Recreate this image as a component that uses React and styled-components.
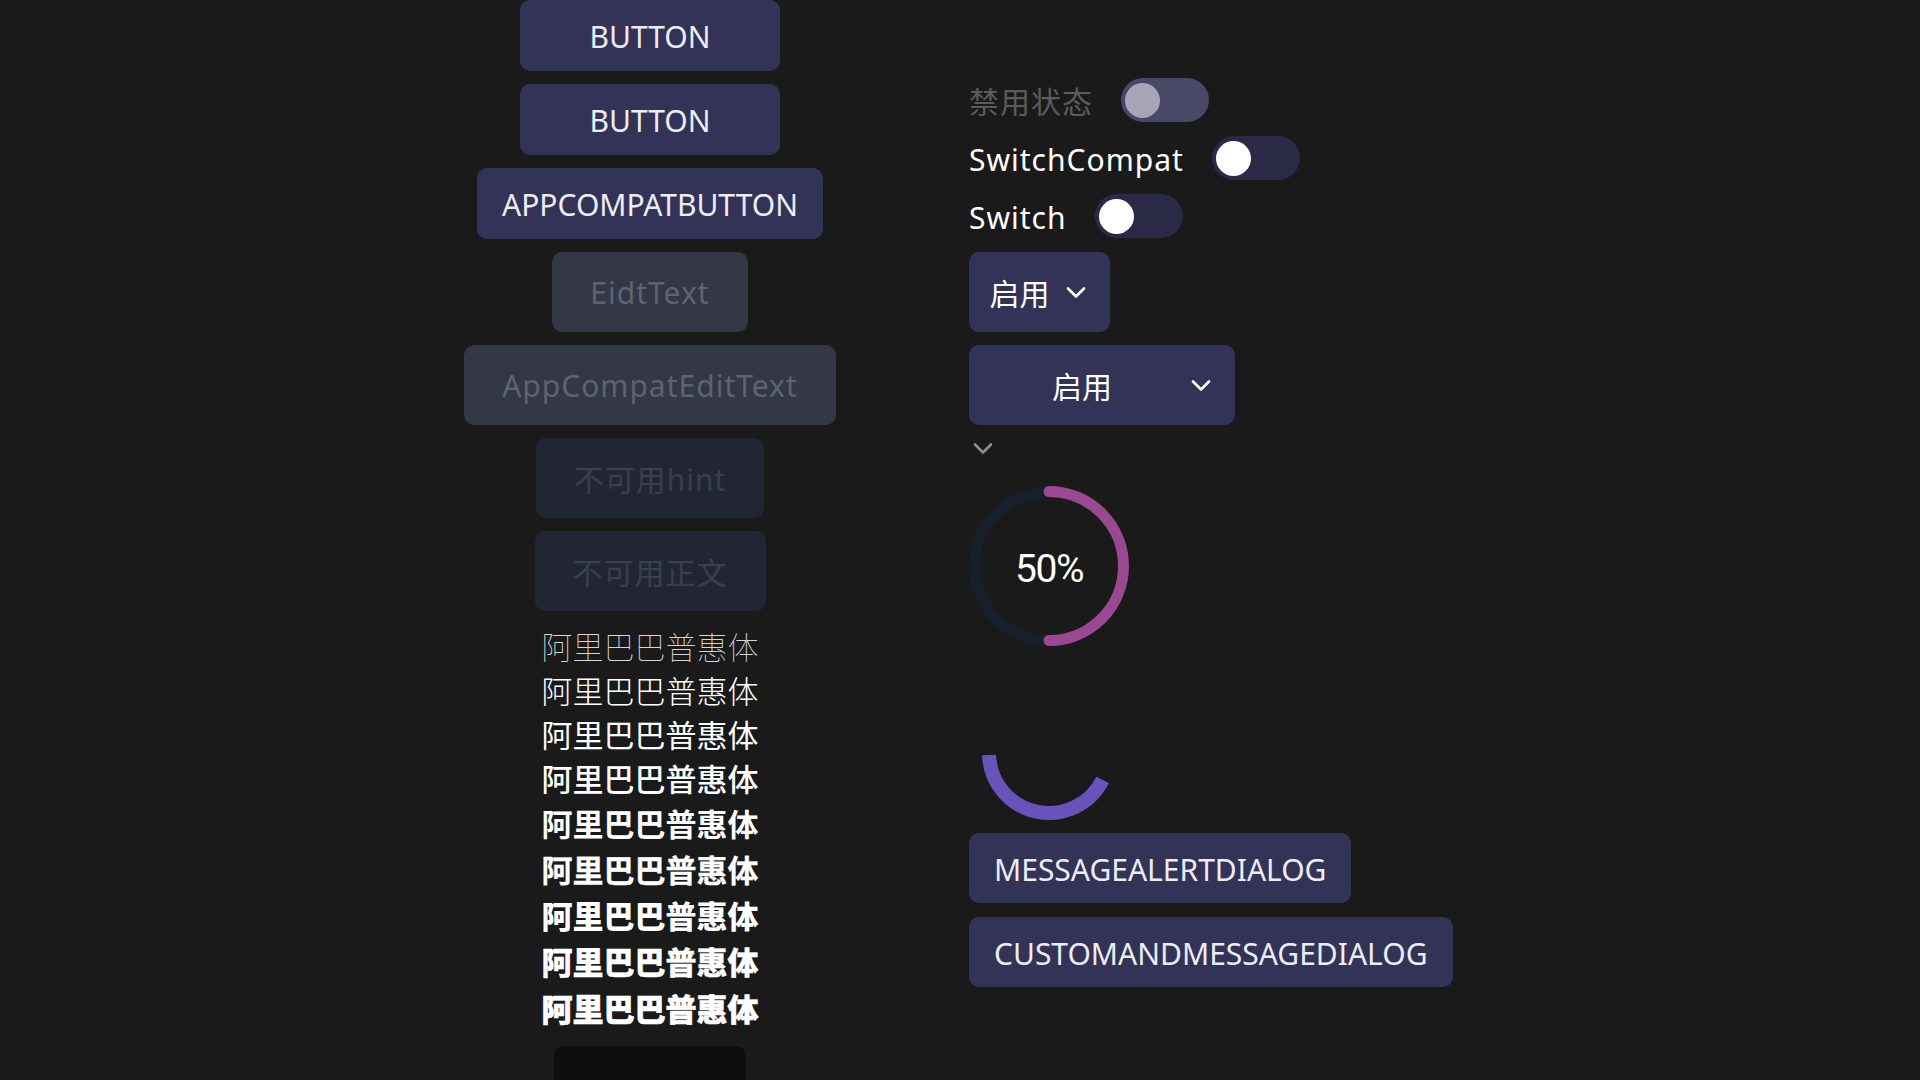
import React from "react";
import styled, { createGlobalStyle } from "styled-components";

const GlobalStyle = createGlobalStyle`
  html, body {
    margin: 0;
    padding: 0;
    background: #1a1a1a;
  }
  body {
    font-family: "Noto Sans", "Noto Sans CJK SC", sans-serif;
    color: #ffffff;
  }
  #root {
    min-height: 1080px;
  }
`;

const Page = styled.div`
  display: flex;
  align-items: flex-start;
  gap: 133px;
  padding-left: 464px;
  height: 1080px;
  overflow: hidden;
  background: #1a1a1a;
`;

const LeftColumn = styled.div`
  width: 372px;
  display: flex;
  flex-direction: column;
  align-items: center;
  gap: 13px;
`;

const RightColumn = styled.div`
  display: flex;
  flex-direction: column;
  align-items: flex-start;
  padding-top: 78px;
`;

const ActionButton = styled.button`
  height: ${(p) => p.$h || 71}px;
  min-width: ${(p) => (p.$min ? 260 : 0)}px;
  padding: 2px 25px 0;
  border: none;
  border-radius: 10px;
  background: #333357;
  color: #ececf3;
  font-family: "Noto Sans", "Noto Sans CJK SC", sans-serif;
  font-size: 30px;
  display: flex;
  align-items: center;
  justify-content: center;
  box-sizing: border-box;
`;

const Field = styled.div`
  height: 80px;
  padding: 0 38px;
  border-radius: 10px;
  box-sizing: border-box;
  display: flex;
  align-items: center;
  justify-content: center;
  font-size: 30px;
  letter-spacing: 1px;
  background: ${(p) => (p.$disabled ? "#222634" : "#343846")};
  color: ${(p) => (p.$disabled ? "#3a3f4e" : "#5e6372")};
`;

const TextStack = styled.div`
  display: flex;
  flex-direction: column;
  align-items: center;
  margin: 0 0 1px;
`;

const WeightLine = styled.div`
  font-family: "Noto Sans CJK SC", sans-serif;
  font-size: 31px;
  line-height: ${(p) => p.$lh}px;
  font-weight: ${(p) => p.$w};
  -webkit-text-stroke: ${(p) => p.$stroke || 0}px #ffffff;
  color: ${(p) => (p.$w < 200 ? "#d6d6d6" : "#ffffff")};
`;

const DarkBox = styled.div`
  width: 192px;
  height: 80px;
  border-radius: 10px;
  background: #0e0e0e;
  flex-shrink: 0;
`;

const SwitchRow = styled.div`
  display: flex;
  align-items: center;
  gap: 28px;
  height: 44px;
  margin-bottom: 14px;
`;

const SwitchLabel = styled.span`
  font-size: 30px;
  letter-spacing: 1px;
  padding-top: 3px;
  color: ${(p) => (p.$disabled ? "#5b5b5b" : "#ffffff")};
  line-height: 1;
`;

const Track = styled.div`
  width: 88px;
  height: 44px;
  border-radius: 22px;
  background: ${(p) => (p.$disabled ? "#4a4868" : "#2a2a47")};
  display: flex;
  align-items: center;
  padding-left: 4px;
  box-sizing: border-box;
`;

const Thumb = styled.div`
  width: 35px;
  height: 35px;
  border-radius: 50%;
  background: ${(p) => (p.$disabled ? "#a6a4b6" : "#ffffff")};
`;

const Spinner = styled.div`
  width: ${(p) => p.$w}px;
  height: 80px;
  border-radius: 10px;
  background: #333357;
  display: flex;
  align-items: center;
  box-sizing: border-box;
  padding-right: 24px;
  margin-bottom: 13px;
`;

const SpinnerText = styled.span`
  flex: 1;
  text-align: center;
  font-size: 30px;
  color: #ffffff;
  padding-left: 4px;
`;

const BareChevron = styled.div`
  height: 37px;
  display: flex;
  align-items: center;
  padding-left: 4px;
  margin-bottom: 13px;
  margin-top: -8px;
`;

const RingStack = styled.div`
  width: 160px;
  height: 160px;
  display: grid;
  place-items: center;
  margin-top: 6px;
  margin-bottom: 27px;
  & > * {
    grid-area: 1 / 1;
  }
`;

const RingLabel = styled.span`
  font-family: Roboto, "Liberation Sans", sans-serif;
  font-size: 39px;
  letter-spacing: -1.5px;
  color: #ffffff;
  margin-top: 6px;
`;

const Indeterminate = styled.svg`
  display: block;
`;

const DialogButtons = styled.div`
  display: flex;
  flex-direction: column;
  align-items: flex-start;
  gap: 14px;
`;

const Chevron = ({ color = "#ffffff", w = 20 }) => (
  <svg width={w} height={13} viewBox="0 0 20 13" fill="none">
    <path
      d="M2 2.5 L10 10.5 L18 2.5"
      stroke={color}
      strokeWidth="2.6"
      strokeLinecap="round"
      strokeLinejoin="round"
    />
  </svg>
);

const Progress = () => (
  <RingStack>
    <svg width="160" height="160" viewBox="0 0 160 160">
      <circle cx="80" cy="80" r="74.5" fill="none" stroke="#17202a" strokeWidth="11" />
      <path
        d="M80 5.5 A74.5 74.5 0 0 1 80 154.5"
        fill="none"
        stroke="#9a4892"
        strokeWidth="11"
        strokeLinecap="round"
      />
    </svg>
    <RingLabel>50%</RingLabel>
  </RingStack>
);

const weights = [
  [100, 44, 0],
  [300, 44, 0],
  [400, 44, 0],
  [500, 44, 0],
  [700, 46, 0],
  [700, 46, 0.3],
  [900, 46, 0],
  [900, 46, 0.3],
  [900, 48, 0.6],
];

export default function App() {
  return (
    <>
      <GlobalStyle />
      <Page>
        <LeftColumn>
          <ActionButton $min>BUTTON</ActionButton>
          <ActionButton $min>BUTTON</ActionButton>
          <ActionButton $min>APPCOMPATBUTTON</ActionButton>
          <Field>EidtText</Field>
          <Field>AppCompatEditText</Field>
          <Field $disabled>不可用hint</Field>
          <Field $disabled>不可用正文</Field>
          <TextStack>
            {weights.map(([w, lh, s], i) => (
              <WeightLine key={i} $w={w} $lh={lh} $stroke={s}>
                阿里巴巴普惠体
              </WeightLine>
            ))}
          </TextStack>
          <DarkBox />
        </LeftColumn>

        <RightColumn>
          <SwitchRow>
            <SwitchLabel $disabled>禁用状态</SwitchLabel>
            <Track $disabled>
              <Thumb $disabled />
            </Track>
          </SwitchRow>
          <SwitchRow>
            <SwitchLabel>SwitchCompat</SwitchLabel>
            <Track>
              <Thumb />
            </Track>
          </SwitchRow>
          <SwitchRow>
            <SwitchLabel>Switch</SwitchLabel>
            <Track>
              <Thumb />
            </Track>
          </SwitchRow>

          <Spinner $w={141}>
            <SpinnerText>启用</SpinnerText>
            <Chevron />
          </Spinner>
          <Spinner $w={266}>
            <SpinnerText>启用</SpinnerText>
            <Chevron />
          </Spinner>
          <BareChevron>
            <Chevron color="#8c8c8c" />
          </BareChevron>

          <Progress />

          <Indeterminate width="160" height="160" viewBox="0 0 160 160">
            <path
              d="M133.66 106.87 A60 60 0 0 1 20.04 82.09"
              fill="none"
              stroke="#6753b9"
              strokeWidth="14"
            />
          </Indeterminate>

          <DialogButtons>
            <ActionButton $h={70}>MESSAGEALERTDIALOG</ActionButton>
            <ActionButton $h={70}>CUSTOMANDMESSAGEDIALOG</ActionButton>
          </DialogButtons>
        </RightColumn>
      </Page>
    </>
  );
}
